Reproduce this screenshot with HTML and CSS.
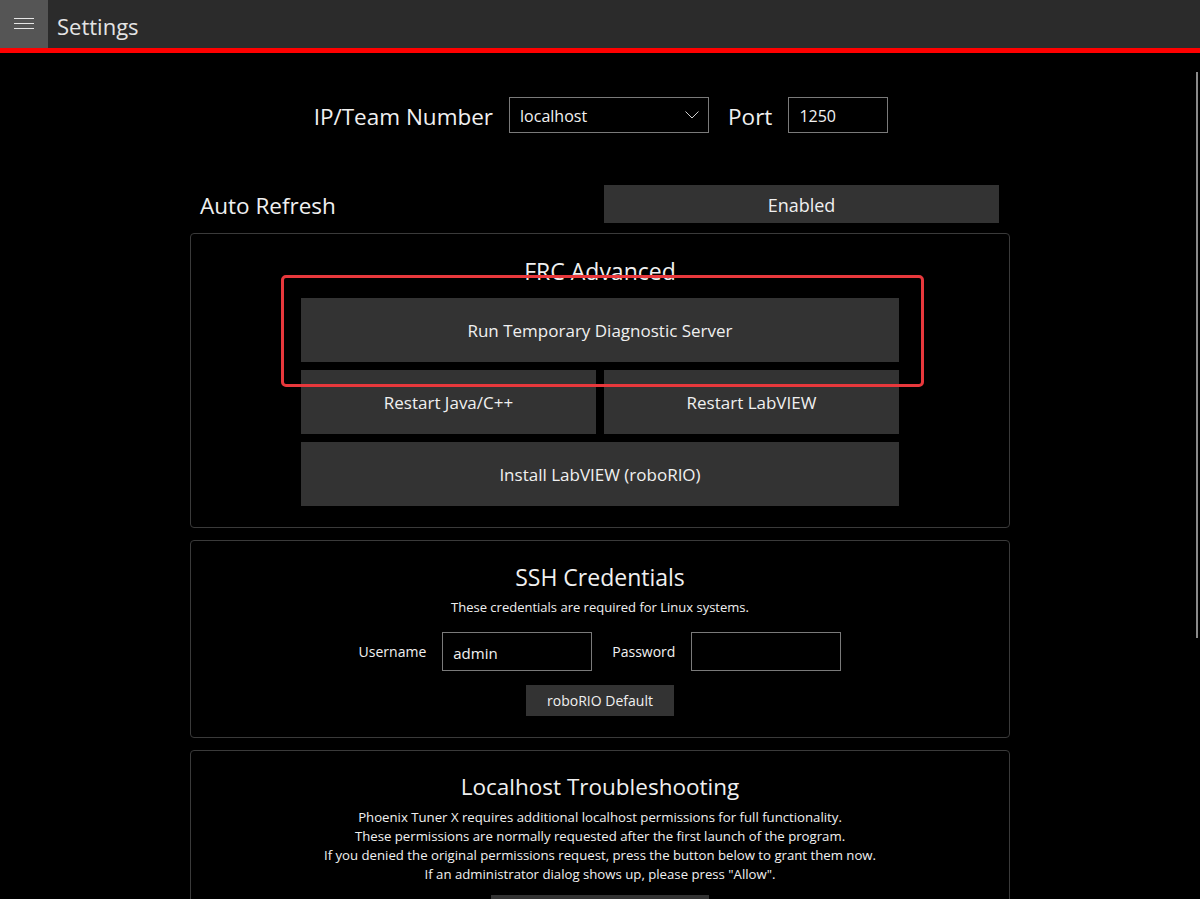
FILE: index.html
```html
<!DOCTYPE html>
<html>
<head>
<meta charset="utf-8">
<title>Settings</title>
<link rel="stylesheet" href="styles.css">
</head>
<body>
<header class="titlebar">
  <div class="menu-btn">
    <svg width="20" height="12" viewBox="0 0 20 12"><path d="M0 0.5H20M0 5.5H20M0 10.5H20" stroke="#e6e6e6" stroke-width="1"/></svg>
  </div>
  <div class="title">Settings</div>
</header>
<main class="page">
  <div class="conn-row">
    <span class="big-label">IP/Team Number</span>
    <div class="combo">
      <span>localhost</span>
      <svg class="chev" width="14" height="8" viewBox="0 0 14 8"><path d="M0.5 0.5L7 7L13.5 0.5" fill="none" stroke="#cfcfcf" stroke-width="1"/></svg>
    </div>
    <span class="big-label">Port</span>
    <div class="textbox port">1250</div>
  </div>

  <div class="column">
    <div class="refresh-row">
      <span class="big-label">Auto Refresh</span>
      <div class="btn toggle">Enabled</div>
    </div>

    <section class="card advanced">
      <h2 class="card-title">FRC Advanced</h2>
      <div class="btn-grid">
        <div class="btn big wide">Run Temporary Diagnostic Server</div>
        <div class="btn big">Restart Java/C++</div>
        <div class="btn big">Restart LabVIEW</div>
        <div class="btn big wide">Install LabVIEW (roboRIO)</div>
      </div>
      <div class="highlight"></div>
    </section>

    <section class="card ssh">
      <h2 class="card-title">SSH Credentials</h2>
      <p class="note">These credentials are required for Linux systems.</p>
      <div class="cred-row">
        <span class="small-label">Username</span>
        <div class="textbox cred">admin</div>
        <span class="small-label pw">Password</span>
        <div class="textbox cred"></div>
      </div>
      <div class="btn small-btn">roboRIO Default</div>
    </section>

    <section class="card localhost">
      <h2 class="card-title lg">Localhost Troubleshooting</h2>
      <p class="note lines">Phoenix Tuner X requires additional localhost permissions for full functionality.<br>These permissions are normally requested after the first launch of the program.<br>If you denied the original permissions request, press the button below to grant them now.<br>If an administrator dialog shows up, please press "Allow".</p>
      <div class="btn grant">Grant Permissions</div>
    </section>
  </div>
  <div class="scrollbar"></div>
</main>
</body>
</html>
```
FILE: styles.css
```css
* { box-sizing: border-box; }
html, body { margin: 0; padding: 0; }
body {
  background: #000;
  color: #f2f2f2;
  font-family: "Open Sans", "Noto Sans", sans-serif;
  width: 1200px;
  height: 899px;
  overflow: hidden;
}
.titlebar {
  display: flex;
  align-items: center;
  height: 53px;
  background: #2b2b2b;
  border-bottom: 5px solid #ff0000;
}
.menu-btn {
  width: 48px;
  height: 48px;
  background: #555;
  display: flex;
  align-items: center;
  justify-content: center;
}
.title {
  margin-left: 9px;
  font-size: 22px;
  color: #e4e4e4;
  line-height: 48px;
  padding-top: 3px;
}
.page {
  position: relative;
  height: 846px;
  padding-top: 44px;
}
.conn-row {
  display: flex;
  justify-content: center;
  align-items: center;
  height: 36px;
  margin-left: 2px;
}
.big-label {
  font-size: 22.5px;
  color: #f0f0f0;
}
.conn-row .big-label { padding-top: 3px; }
.combo {
  width: 200px;
  height: 36px;
  border: 1px solid #7a7a7a;
  margin: 0 19px 0 16px;
  display: flex;
  align-items: center;
  justify-content: space-between;
  padding: 0 9px 0 10px;
  font-size: 16px;
}
.textbox {
  border: 1px solid #7a7a7a;
  display: flex;
  align-items: center;
  padding-left: 10px;
  font-size: 16px;
}
.combo span, .port { padding-top: 1px; }
.port {
  width: 100px;
  height: 36px;
  margin-left: 16px;
}
.column {
  width: 820px;
  margin: 52px auto 0;
}
.refresh-row {
  display: grid;
  grid-template-columns: 1fr 395px;
  align-items: center;
  padding: 0 11px 0 10px;
  height: 38px;
}
.refresh-row .big-label { padding-top: 2px; }
.btn {
  background: #333;
  color: #f0f0f0;
  display: flex;
  align-items: center;
  justify-content: center;
}
.toggle {
  height: 38px;
  font-size: 18px;
  padding-top: 2px;
}
.card {
  position: relative;
  border: 1px solid #3a3a3a;
  border-radius: 4px;
  margin-top: 10px;
  padding: 0 0 21px;
  text-align: center;
}
.card + .card { margin-top: 12px; }
.card-title {
  margin: 0;
  font-weight: normal;
  font-size: 23px;
  color: #f0f0f0;
}
.advanced .card-title { padding-top: 22px; line-height: 30px; }
.btn-grid {
  width: 598px;
  margin: 12px auto 0;
  display: grid;
  grid-template-columns: 1fr 1fr;
  gap: 8px;
}
.btn.big {
  height: 64px;
  font-size: 17px;
}
.btn.wide { grid-column: 1 / 3; }
.highlight {
  position: absolute;
  left: 90px;
  top: 41px;
  width: 643px;
  height: 112px;
  border: 3px solid #e8383c;
  border-radius: 5px;
}
.ssh .card-title { padding-top: 21px; line-height: 30px; }
.note {
  margin: 0;
  font-size: 13px;
  color: #f0f0f0;
}
.ssh .note { margin-top: 5px; line-height: 20px; }
.cred-row {
  display: flex;
  justify-content: center;
  align-items: center;
  margin-top: 15px;
}
.small-label {
  font-size: 14px;
  margin-right: 16px;
}
.small-label.pw { margin-left: 20px; }
.cred {
  width: 150px;
  height: 39px;
  font-size: 15px;
  padding-top: 3px;
}
.small-btn {
  width: 148px;
  height: 31px;
  margin: 14px auto 0;
  font-size: 14px;
}
.localhost .card-title.lg { padding-top: 21px; font-size: 22.5px; line-height: 30px; }
.note.lines { line-height: 19px; margin-top: 6px; font-size: 13.2px; }
.grant {
  width: 218px;
  height: 40px;
  margin: 11px auto 0;
  font-size: 16px;
}
.scrollbar {
  position: absolute;
  right: 2px;
  top: 19px;
  width: 2px;
  height: 566px;
  background: #8a8a8a;
}
```
